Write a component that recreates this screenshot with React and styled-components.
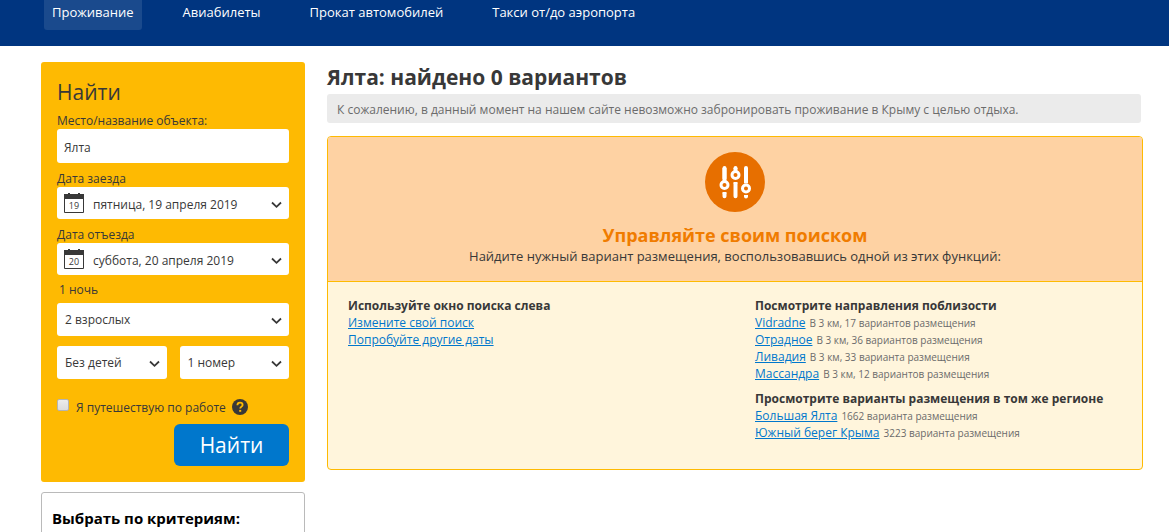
import React from "react";
import styled, { createGlobalStyle } from "styled-components";

const GlobalStyle = createGlobalStyle`
  *, *::before, *::after { box-sizing: border-box; }
  body {
    margin: 0;
    background: #fff;
    color: #383838;
    font-family: "Open Sans", "Noto Sans", sans-serif;
    font-size: 12px;
    line-height: 17px;
  }
  h1, h2, h3, p, ul { margin: 0; padding: 0; }
  ul { list-style: none; }
  input, select, button { font: inherit; color: inherit; }
`;

const Header = styled.header`
  background: #003580;
  height: 46px;
  padding: 0 41px;
`;

const Nav = styled.nav`
  display: flex;
  gap: 33px;
  margin-left: 3px;
`;

const NavLink = styled.a`
  padding: 2px 8px 8px;
  border-radius: 0 0 3px 3px;
  background: ${(p) => (p.$active ? "#1a4a8d" : "transparent")};
  color: #fff;
  font-size: 13px;
  line-height: 20px;
  text-decoration: none;
  white-space: nowrap;
`;

const Page = styled.div`
  display: grid;
  grid-template-columns: 264px minmax(0, 1fr);
  gap: 22px;
  padding: 16px 26px 0 41px;
`;

const Sidebar = styled.aside`
  display: flex;
  flex-direction: column;
  gap: 10px;
`;

const SearchForm = styled.form`
  display: flex;
  flex-direction: column;
  padding: 16px;
  border-radius: 3px;
  background: #feba02;
`;

const FormTitle = styled.h2`
  font-size: 21px;
  font-weight: 400;
  line-height: 28px;
  margin-bottom: 7px;
`;

const Label = styled.label`
  line-height: 16px;
`;

const Field = styled.div`
  display: flex;
  flex-direction: column;
  margin-bottom: 8px;
`;

const TextInput = styled.input`
  width: 100%;
  height: 34px;
  padding: 2px 7px 0;
  border: 0;
  border-radius: 3px;
  background: #fff;
`;

const SelectBox = styled.div`
  position: relative;
  flex: 1;
  min-width: 0;
`;

const Select = styled.select`
  display: block;
  appearance: none;
  width: 100%;
  height: ${(p) => (p.$date ? 32 : 33)}px;
  padding: ${(p) => (p.$date ? "2px 28px 0 36px" : "0 28px 0 8px")};
  border: 0;
  border-radius: 3px;
  background: #fff;
`;

const ChevronIcon = styled.svg`
  position: absolute;
  right: 7px;
  top: 14px;
  width: 11px;
  height: 8px;
  pointer-events: none;
`;

const CalendarIcon = styled.svg`
  position: absolute;
  left: 7px;
  top: 5px;
  width: 20px;
  height: 21px;
  pointer-events: none;
`;

const Nights = styled.p`
  padding-left: 2px;
  line-height: 16px;
  margin: -1px 0 5px;
`;

const SelectRow = styled.div`
  display: flex;
  gap: 13px;
  margin-top: 10px;
`;

const CheckRow = styled.div`
  display: flex;
  align-items: center;
  height: 18px;
  margin: 19px 0 8px;
`;

const Checkbox = styled.input`
  appearance: none;
  width: 12px;
  height: 12px;
  margin: 0 7px 4px 0;
  border: 1px solid #b4b4b4;
  border-radius: 2px;
  background: linear-gradient(#ececec, #dcdcdc);
  &:checked { background: #0077cc; }
`;

const HelpIcon = styled.svg`
  width: 16px;
  height: 16px;
  margin-left: 6px;
`;

const SubmitButton = styled.button`
  align-self: flex-end;
  width: 115px;
  height: 42px;
  padding: 1px 0 0;
  border: 0;
  border-radius: 6px;
  background: #0077cc;
  color: #fff;
  font-size: 21px;
`;

const FilterPanel = styled.section`
  padding: 15px 10px;
  border: 1px solid #bababa;
  border-radius: 3px;
`;

const FilterTitle = styled.h2`
  color: #000;
  font-size: 15px;
  line-height: 20px;
`;

const Title = styled.h1`
  font-size: 21px;
  line-height: 30px;
  margin-bottom: 2px;
`;

const Notice = styled.p`
  margin: 0 2px 13px 0;
  padding: 7px 10px 5px;
  border-radius: 3px;
  background: #ebebeb;
  color: #6b6b6b;
`;

const Suggestions = styled.section`
  border: 1px solid #feba02;
  border-radius: 4px;
  background: #fff5dc;
  overflow: hidden;
`;

const Hero = styled.div`
  display: flex;
  flex-direction: column;
  align-items: center;
  padding: 15px 0 16px;
  border-bottom: 1px solid #feba02;
  background: #fed2a3;
`;

const HeroIcon = styled.svg`
  width: 60px;
  height: 60px;
  margin-bottom: 11px;
`;

const HeroTitle = styled.h2`
  color: #f07c00;
  font-size: 18px;
  line-height: 25px;
`;

const HeroText = styled.p`
  font-size: 13px;
`;

const Columns = styled.div`
  display: grid;
  grid-template-columns: 1fr 1fr;
  padding: 15px 0 20px;
`;

const Column = styled.div`
  padding-left: 20px;
`;

const Group = styled.div`
  margin-bottom: 8px;
`;

const GroupTitle = styled.h3`
  font-size: 12px;
  line-height: 17px;
`;

const Item = styled.li`
  display: flex;
  align-items: baseline;
  gap: 4px;
  height: 17px;
`;

const ItemLink = styled.a`
  color: #0077cc;
  text-decoration: underline;
`;

const ItemNote = styled.span`
  color: #6b6b6b;
  font-size: 10px;
`;

function Chevron() {
  return (
    <ChevronIcon viewBox="0 0 11 8" fill="none" stroke="#383838" strokeWidth="1.8" aria-hidden="true">
      <path d="M1 1.5 5.5 5.8 10 1.5" />
    </ChevronIcon>
  );
}

function Calendar({ day }) {
  return (
    <CalendarIcon viewBox="0 0 20 21" aria-hidden="true">
      <path d="M4 1h2v1H4zM14 1h2v1h-2zM0 2h20v5H0z" fill="#383838" />
      <path d="M0.5 3v17.5h19V3" fill="none" stroke="#383838" />
      <text x="10" y="17" textAnchor="middle" fontSize="9" fill="#383838">{day}</text>
    </CalendarIcon>
  );
}

function SelectField({ id, label, value, day }) {
  return (
    <SelectBox>
      <Select id={id} aria-label={label} $date={Boolean(day)} defaultValue={value}>
        <option>{value}</option>
      </Select>
      {day && <Calendar day={day} />}
      <Chevron />
    </SelectBox>
  );
}

function LinkGroup({ title, items }) {
  return (
    <Group>
      <GroupTitle>{title}</GroupTitle>
      <ul>
        {items.map(([name, note]) => (
          <Item key={name}>
            <ItemLink href="#">{name}</ItemLink>
            {note && <ItemNote>{note}</ItemNote>}
          </Item>
        ))}
      </ul>
    </Group>
  );
}

const navItems = ["Проживание", "Авиабилеты", "Прокат автомобилей", "Такси от/до аэропорта"];

const searchTips = [["Измените свой поиск"], ["Попробуйте другие даты"]];

const nearby = [
  ["Vidradne", "В 3 км, 17 вариантов размещения"],
  ["Отрадное", "В 3 км, 36 вариантов размещения"],
  ["Ливадия", "В 3 км, 33 варианта размещения"],
  ["Массандра", "В 3 км, 12 вариантов размещения"],
];

const region = [
  ["Большая Ялта", "1662 варианта размещения"],
  ["Южный берег Крыма", "3223 варианта размещения"],
];

export default function App() {
  return (
    <>
      <GlobalStyle />
      <Header>
        <Nav>
          {navItems.map((item, i) => (
            <NavLink key={item} href="#" $active={i === 0}>{item}</NavLink>
          ))}
        </Nav>
      </Header>
      <Page>
        <Sidebar>
          <SearchForm onSubmit={(e) => e.preventDefault()}>
            <FormTitle>Найти</FormTitle>
            <Field>
              <Label htmlFor="place">Место/название объекта:</Label>
              <TextInput id="place" defaultValue="Ялта" />
            </Field>
            <Field>
              <Label htmlFor="checkin">Дата заезда</Label>
              <SelectField id="checkin" value="пятница, 19 апреля 2019" day="19" />
            </Field>
            <Field>
              <Label htmlFor="checkout">Дата отъезда</Label>
              <SelectField id="checkout" value="суббота, 20 апреля 2019" day="20" />
            </Field>
            <Nights>1 ночь</Nights>
            <SelectField label="Взрослые" value="2 взрослых" />
            <SelectRow>
              <SelectField label="Дети" value="Без детей" />
              <SelectField label="Номера" value="1 номер" />
            </SelectRow>
            <CheckRow>
              <Checkbox type="checkbox" id="business" />
              <label htmlFor="business">Я путешествую по работе</label>
              <HelpIcon viewBox="0 0 16 16" aria-hidden="true">
                <circle cx="8" cy="8" r="8" fill="#383838" />
                <path d="M5.4 6.2C5.4 4.5 6.5 3.7 8 3.7s2.6.9 2.6 2.2c0 1.7-2.4 1.8-2.4 3.7" fill="none" stroke="#feba02" strokeWidth="1.8" />
                <path d="M7.2 10.9h2v1.9h-2z" fill="#feba02" />
              </HelpIcon>
            </CheckRow>
            <SubmitButton type="submit">Найти</SubmitButton>
          </SearchForm>
          <FilterPanel>
            <FilterTitle>Выбрать по критериям:</FilterTitle>
          </FilterPanel>
        </Sidebar>
        <main>
          <Title>Ялта: найдено 0 вариантов</Title>
          <Notice>
            К сожалению, в данный момент на нашем сайте невозможно забронировать проживание в Крыму с целью отдыха.
          </Notice>
          <Suggestions>
            <Hero>
              <HeroIcon viewBox="0 0 60 60" aria-hidden="true">
                <circle cx="30" cy="30" r="30" fill="#e76f00" />
                <g fill="none" stroke="#fff" strokeWidth="4" strokeLinecap="round">
                  <path d="M19.5 16v13M30.5 16v2M41 16v16" />
                  <path d="M19.5 42v2.3M30.5 32v12.3M41 44.3v.1" />
                </g>
                <path d="M17.5 40h4v2h-4zM28.5 30h4v2h-4zM39 43h4v1.5h-4z" fill="#fff" />
                <g fill="none" stroke="#e76f00" strokeWidth="1.5">
                  <circle cx="19.5" cy="33" r="5.8" />
                  <circle cx="30.5" cy="23" r="5.8" />
                  <circle cx="41" cy="36.5" r="5.8" />
                </g>
                <path d="M19.5 16v12M30.5 16v2M41 16v15" fill="none" stroke="#fff" strokeWidth="4" />
                <g fill="#e76f00" stroke="#fff" strokeWidth="3">
                  <circle cx="19.5" cy="33" r="3.5" />
                  <circle cx="30.5" cy="23" r="3.5" />
                  <circle cx="41" cy="36.5" r="3.5" />
                </g>
              </HeroIcon>
              <HeroTitle>Управляйте своим поиском</HeroTitle>
              <HeroText>Найдите нужный вариант размещения, воспользовавшись одной из этих функций:</HeroText>
            </Hero>
            <Columns>
              <Column>
                <LinkGroup title="Используйте окно поиска слева" items={searchTips} />
              </Column>
              <Column>
                <LinkGroup title="Посмотрите направления поблизости" items={nearby} />
                <LinkGroup title="Просмотрите варианты размещения в том же регионе" items={region} />
              </Column>
            </Columns>
          </Suggestions>
        </main>
      </Page>
    </>
  );
}
